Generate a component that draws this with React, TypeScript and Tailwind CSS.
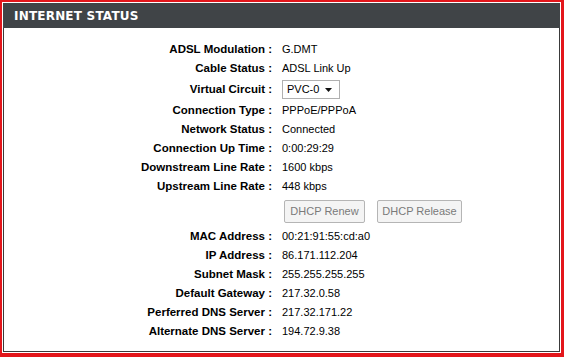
const rowsTop: [string, string][] = [
  ["ADSL Modulation", "G.DMT"],
  ["Cable Status", "ADSL Link Up"],
];

const rowsMid: [string, string][] = [
  ["Connection Type", "PPPoE/PPPoA"],
  ["Network Status", "Connected"],
  ["Connection Up Time", "0:00:29:29"],
  ["Downstream Line Rate", "1600 kbps"],
  ["Upstream Line Rate", "448 kbps"],
];

const rowsBottom: [string, string][] = [
  ["MAC Address", "00:21:91:55:cd:a0"],
  ["IP Address", "86.171.112.204"],
  ["Subnet Mask", "255.255.255.255"],
  ["Default Gateway", "217.32.0.58"],
  ["Perferred DNS Server", "217.32.171.22"],
  ["Alternate DNS Server", "194.72.9.38"],
];

function Row({ label, children, tall }: { label: string; children: React.ReactNode; tall?: string }) {
  return (
    <div className={`grid grid-cols-[268px_1fr] gap-x-[10px] items-center ${tall ?? "h-[19px]"}`}>
      <div className="text-right font-bold text-black text-[11.5px]">{label} :</div>
      <div className="text-black">{children}</div>
    </div>
  );
}

export default function App() {
  return (
    <div
      className="w-[564px] h-[357px] bg-white border-solid border-[#e3161b] border-t-2 border-l-2 border-r-[3px] border-b-4 p-px flex flex-col"
      style={{ fontFamily: '"Liberation Sans", Arial, sans-serif' }}
    >
      <div className="flex-1 border border-[#3a3a3a] flex flex-col text-[11px]">
        {/* Header */}
        <div className="h-[25px] bg-[#404447] flex items-center pl-[11px] -mx-px -mt-px">
          <span
            className="text-white font-bold text-[12px] tracking-[0.2px]"
            style={{ fontFamily: '"DejaVu Sans", Verdana, sans-serif' }}
          >
            INTERNET STATUS
          </span>
        </div>

        <div className="pt-[12px]">
          {rowsTop.map(([l, v]) => (
            <Row key={l} label={l}>
              {v}
            </Row>
          ))}

          <Row label="Virtual Circuit" tall="h-[23px]">
            <div className="w-[58px] h-[19px] border border-[#b0b0b0] bg-white flex items-center justify-between pl-[4px] pr-[7px]">
              <span>PVC-0</span>
              <svg width="7" height="4" viewBox="0 0 7 4">
                <path d="M0 0h7L3.5 4z" fill="#111" />
              </svg>
            </div>
          </Row>

          {rowsMid.map(([l, v]) => (
            <Row key={l} label={l}>
              {v}
            </Row>
          ))}

          <div className="h-[31px] flex items-center gap-[12px] pl-[280px]">
            <button className="h-[23px] w-[81px] border border-[#b5b5b5] rounded-[2px] bg-[#f4f4f4] text-[#7a7a7a] text-[11px]">
              DHCP Renew
            </button>
            <button className="h-[23px] w-[85px] border border-[#b5b5b5] rounded-[2px] bg-[#f4f4f4] text-[#7a7a7a] text-[11px]">
              DHCP Release
            </button>
          </div>

          {rowsBottom.map(([l, v]) => (
            <Row key={l} label={l}>
              {v}
            </Row>
          ))}
        </div>
      </div>
    </div>
  );
}
